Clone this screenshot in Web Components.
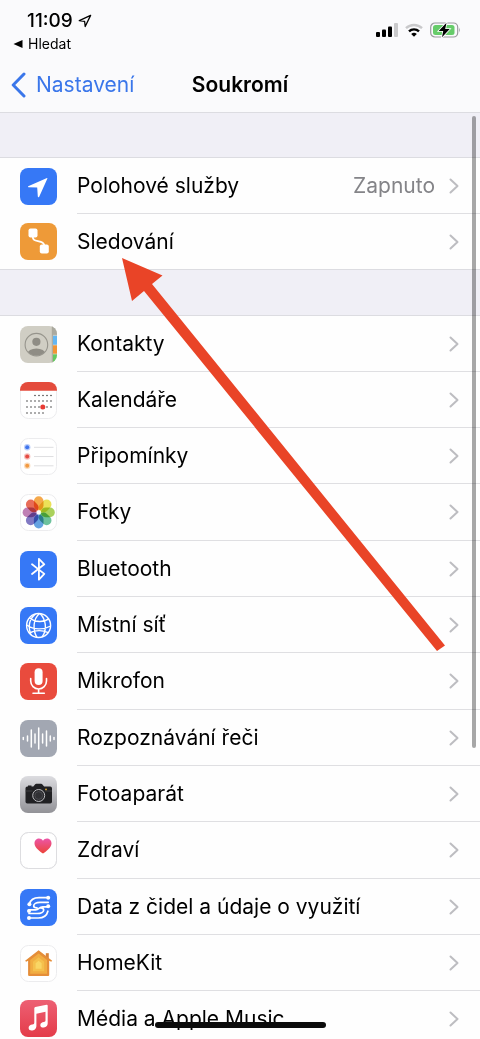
<!DOCTYPE html>
<html lang="cs">
<head>
<meta charset="utf-8">
<meta name="viewport" content="width=device-width, initial-scale=1">
<title>Soukromí</title>
<style>
html, body { margin: 0; }
body { font-family: Inter, "Noto Sans", sans-serif; color: #000; background: #f0eff6; }
</style>
</head>
<body>
<privacy-screen>
  <status-bar slot="top" time="11:09" back="Hledat"></status-bar>
  <nav-bar slot="top" back="Nastavení">Soukromí</nav-bar>
  <settings-group>
    <settings-row icon="location" value="Zapnuto">Polohové služby</settings-row>
    <settings-row icon="tracking">Sledování</settings-row>
  </settings-group>
  <settings-group>
    <settings-row icon="contacts">Kontakty</settings-row>
    <settings-row icon="calendar">Kalendáře</settings-row>
    <settings-row icon="reminders">Připomínky</settings-row>
    <settings-row icon="photos">Fotky</settings-row>
    <settings-row icon="bluetooth">Bluetooth</settings-row>
    <settings-row icon="network">Místní síť</settings-row>
    <settings-row icon="microphone">Mikrofon</settings-row>
    <settings-row icon="speech">Rozpoznávání řeči</settings-row>
    <settings-row icon="camera">Fotoaparát</settings-row>
    <settings-row icon="health">Zdraví</settings-row>
    <settings-row icon="sensors">Data z čidel a údaje o využití</settings-row>
    <settings-row icon="home">HomeKit</settings-row>
    <settings-row icon="music">Média a Apple Music</settings-row>
  </settings-group>
</privacy-screen>

<script>
const tile = (fill, body) => `<rect width="37" height="37" rx="8" fill="${fill}"/>${body}`;
const whiteTile = body => `<rect x=".5" y=".5" width="36" height="36" rx="8" fill="#fff" stroke="#ececee"/>${body}`;

const calendarDots = [[13.5, 15, 31], [19, 7, 31], [25, 7, 31], [31, 7, 23]].map(([y, from, to]) => {
  let dots = '';
  for (let x = from; x <= to; x += 4) dots += `<circle cx="${x}" cy="${y}" r=".8"/>`;
  return dots;
}).join('');

const petals = ['#f39a2d', '#e9dc3b', '#9bc93f', '#54b78c', '#4a93dc', '#6b62b8', '#b56aa8', '#e4523b'].map((c, i) =>
  `<rect x="13.9" y="2.3" width="9.6" height="14" rx="4.8" fill="${c}" fill-opacity=".85" transform="rotate(${i * 45} 18.7 18.4)" style="mix-blend-mode:multiply"/>`).join('');

const soundBars = [[3.3, 2], [7.5, 5], [11.3, 17], [15, 9], [18.7, 21], [22.6, 9], [26.5, 15], [30.3, 5], [34, 2]].map(([x, h]) =>
  `<path d="M${x} ${18.6 - h / 2}v${h}"/>`).join('');

const ICONS = {
  location: tile('#3678f6', '<path d="M27 9.9 8.2 18.2q-.6.8.4 1l8.6.3.6 9q.6 1.3 1.4.2L27.4 10.4q.1-.6-.4-.5z" fill="#fff"/>'),
  tracking: tile('#ee9a38', '<rect x="8.5" y="5.500" width="9" height="9" rx="2" fill="#fff"/><rect x="19.800" y="21.600" width="9" height="9" rx="2" fill="#fff"/><path d="M12.700 13c0 4 2 4.600 5.200 5.200 4.300.8 6.300 1.600 6.500 4.800" fill="none" stroke="#fff" stroke-width="1.800"/>'),
  contacts: `<defs><clipPath id="c"><rect width="37" height="37" rx="8"/></clipPath><clipPath id="p"><circle cx="16.400" cy="18.700" r="11"/></clipPath></defs>
    <g clip-path="url(#c)"><path fill="#d0cec4" d="M0 0h37v37H0z"/><path fill="#aaa99f" d="M32 0h5v9.500h-5z"/><path fill="#63b6f2" d="M32.800 9.500H37V19h-4.200z"/><path fill="#f29434" d="M32.800 19H37v9h-4.200z"/><path fill="#63cb60" d="M32.800 28H37v9h-4.200z"/><path stroke="#aaa89d" d="M32.300 0v37"/><path stroke="#d9d7ce" stroke-width=".7" d="M33 9.300h4M33 19h4M33 28h4"/></g>
    <g clip-path="url(#p)" fill="#8f8d85"><circle cx="16.400" cy="15.800" r="4.100"/><ellipse cx="16.400" cy="28" rx="9" ry="5.500"/></g><circle cx="16.400" cy="18.700" r="11.300" fill="none" stroke="#96948c" stroke-width="1.100"/>`,
  calendar: whiteTile(`<path d="M0 8.700V8a8 8 0 0 1 8-8h21a8 8 0 0 1 8 8v.7z" fill="#e44b3c"/><g fill="#444">${calendarDots}</g><circle cx="22.800" cy="25" r="2.500" fill="#e83b34"/>`),
  reminders: whiteTile(['#3e74ed', '#e54a41', '#f29a42'].map((c, i) => {
    const y = 9.3 + i * 9.25;
    return `<circle cx="7.200" cy="${y}" r="3.200" fill="${c}" opacity=".35"/><circle cx="7.200" cy="${y}" r="2" fill="${c}"/><path d="M14 ${y}h19.500" stroke="#dedee0" stroke-width="1"/>`;
  }).join('')),
  photos: whiteTile(`<g style="isolation:isolate">${petals}</g><circle cx="18.700" cy="18.400" r="1.500" fill="#fff"/>`),
  bluetooth: tile('#3678f6', '<path d="m12 13.200 12.300 9.700-5.400 5.800V7.800l5.400 5.500L12 23" fill="none" stroke="#fff" stroke-width="1.800" stroke-linejoin="round" stroke-linecap="round"/>'),
  network: tile('#3678f6', '<g fill="none" stroke="#fff" stroke-width="1.400"><circle cx="18.600" cy="18.500" r="12"/><path d="M19.500 6.500C13 12 12.500 23 17 30.500M20 6.500c6 6 7.500 16.500 2 23.500M9.500 11c6 4.500 14 4.800 19.500.5M6.700 18c7 5 17 5 24 1M9.300 26c6-3 13-3 19-.4M15.500 7C8 13 8 20 11 28"/></g>'),
  microphone: tile('#e94b3d', '<rect x="14.600" y="5.300" width="8" height="16.800" rx="4" fill="#fff"/><path d="M10.700 15.500v2.600a7.900 7.900 0 0 0 15.800 0v-2.600M18.600 26v4M13 30.300h11.300" fill="none" stroke="#fff" stroke-width="1.600" stroke-linecap="round"/>'),
  speech: tile('#a2a7b2', `<g stroke="#fff" stroke-width="1.500" stroke-linecap="round">${soundBars}</g>`),
  camera: `<defs><linearGradient id="g" x2="0" y2="1"><stop stop-color="#dcdce0"/><stop offset="1" stop-color="#929297"/></linearGradient></defs>${tile('url(#g)', '<path d="M7.300 10.500h.7v-1h3.500v1h1.800l1.900-2.300q.4-.5 1-.5h5q.6 0 1 .5l1.900 2.300h6.100q1.800 0 1.800 1.800v13.400q0 1.800-1.800 1.800H7.300q-1.800 0-1.800-1.800V12.300q0-1.800 1.800-1.800z" fill="#202023"/><path d="M5.500 15h7M25 15h7" stroke="#4a4a4d" stroke-width=".7"/><circle cx="18.700" cy="19.500" r="6" fill="#29292c" stroke="#bcbcc0" stroke-width="1"/><circle cx="18.700" cy="19.500" r="3.900" fill="#303034" stroke="#55555a" stroke-width=".7"/><circle cx="26" cy="13.400" r=".9" fill="#e3ae37"/>')}`,
  health: `<defs><linearGradient id="g" x2="0" y2="1"><stop stop-color="#ec55a7"/><stop offset="1" stop-color="#ec4438"/></linearGradient></defs>${whiteTile('<rect x=".5" y=".5" width="36" height="36" rx="8" fill="none" stroke="#dddde0"/><path d="M23 21.500c-3-2.200-8.500-5.800-8.500-10.100 0-5.200 6.200-6.500 8.500-2.600 2.300-3.900 8.500-2.600 8.500 2.600 0 4.300-5.500 7.900-8.500 10.100z" fill="url(#g)"/>')}`,
  sensors: tile('#3678f6', '<g fill="none" stroke="#fff" stroke-width="1.700" stroke-linecap="round"><path d="M28.200 8.700H19c-5 0-8.500 2-9.500 6.300M9 29h9.200c5 0 8.500-2 9.700-6.800M28.200 13.300H20c-4 0-6.300 1.700-6.300 3.600s1.300 1.900 3.300 1.900M9 24.500h8.200c4 0 6.500-1.700 6.500-3.600s-1.400-2.100-3.200-2.100M28.200 17.800h-5.400c-4 0-3.600 3-7.200 3H9"/></g><g fill="#fff"><circle cx="28.200" cy="8.700" r="2"/><circle cx="28.200" cy="17.200" r="2"/><circle cx="9.400" cy="15.200" r="2"/><circle cx="9" cy="22" r="2"/><circle cx="9" cy="29" r="2"/></g>'),
  home: whiteTile('<path d="M25.800 8.200h3v6h-3z" fill="#d8843a"/><path d="m18.600 5.300 13.600 10.500-1 1-2-1V30q0 1-1 1H9.100q-1 0-1-1V15.800l-2 1-1-1z" fill="#e58e39"/><path d="m18.600 8.500 8.400 6.600v13.700H10.200V15.100z" fill="#f1ad42"/><path d="m18.600 12.300 5.600 4.400v9.600H13v-9.600z" fill="#f5c04d"/><path d="m18.600 15.800 3 2.400v5.500h-6v-5.500z" fill="#f9d665"/>'),
  music: `<defs><linearGradient id="g" x2="0" y2="1"><stop stop-color="#ed6074"/><stop offset="1" stop-color="#e43b49"/></linearGradient></defs>${tile('url(#g)', '<path d="M14.300 8.300q0-1 1-1.200l11.200-2.300q1.200-.2 1.200 1v17.400c0 5-7.400 5.800-7.400 2 0-2.200 1.700-2.900 3.500-3.200 1.200-.2 1.700-.6 1.700-1.800v-8.400l-9.100 1.900v12.200c0 5.200-7.800 6-7.800 2 0-2.200 1.800-3 3.800-3.300 1.400-.3 1.900-.7 1.900-2z" fill="#fff"/>')}`
};

class BaseElement extends HTMLElement {
  connectedCallback() {
    if (this.shadowRoot) return;
    this.attachShadow({ mode: 'open' }).innerHTML = this.render();
  }
}

customElements.define('app-icon', class extends BaseElement {
  render() {
    return `<style>:host { display: block; flex: none; width: 37px; height: 37px; } svg { display: block; width: 100%; height: 100%; }</style>
      <svg viewBox="0 0 37 37" aria-hidden="true">${ICONS[this.getAttribute('name')]}</svg>`;
  }
});

customElements.define('status-bar', class extends BaseElement {
  render() {
    return `<style>
        :host { display: flex; justify-content: space-between; align-items: flex-start; padding: 9px 19px 0 12px; }
        .time { display: flex; align-items: center; gap: 5px; margin-left: 15px; font-size: 19px; line-height: 24px; font-weight: 500; }
        a { display: flex; align-items: center; gap: 5px; margin-top: 3px; font-size: 14px; line-height: 16px; color: #000; text-decoration: none; }
        .signals { display: flex; align-items: center; gap: 7px; margin-top: 13px; }
        svg { display: block; flex: none; }
      </style>
      <div>
        <div class="time"><span>${this.getAttribute('time')}</span>
          <svg width="14" height="14" viewBox="0 0 14 14" aria-hidden="true"><path d="M12.600 1.400 1.300 6.700l5.300.6.6 5.200z" fill="none" stroke="#000" stroke-width="1.300" stroke-linejoin="round"/></svg></div>
        <a href="#"><svg width="11" height="10" viewBox="0 0 11 10" aria-hidden="true"><path d="M1.500 5 10.500 1v8z"/></svg><span>${this.getAttribute('back')}</span></a>
      </div>
      <div class="signals" aria-hidden="true">
        <svg width="22" height="14" viewBox="0 0 22 14"><rect y="9" width="4" height="5" rx="1"/><rect x="6" y="6.500" width="4" height="7.500" rx="1"/><rect x="12" y="3.500" width="4" height="10.500" rx="1"/><rect x="18" width="4" height="14" rx="1" fill="#c9c9cb"/></svg>
        <svg width="18" height="14" viewBox="0 0 18 14"><g fill="none" stroke-width="2.400"><path d="M1 5.200a11.500 11.500 0 0 1 16 0" stroke="#c9c9cb"/><path d="M4 8.400a7.200 7.200 0 0 1 10 0" stroke="#000"/></g><path d="M9 13.700 6.200 11a4 4 0 0 1 5.600 0z"/></svg>
        <svg width="31" height="16" viewBox="0 0 31 16"><rect x=".7" y="1" width="27" height="14" rx="4.300" fill="none" stroke="#9a9a9d" stroke-width="1.200"/><rect x="3" y="3" width="21.500" height="10" rx="2.500" fill="#66cc6a"/><path d="M29.200 5.500q1.500 2.500 0 5z" fill="#8d8d90"/><path d="M16.500.8 8.700 9h4.500L12 15.300 19.700 7h-4.500z" stroke="#fff" stroke-width="1.600" paint-order="stroke"/></svg>
      </div>`;
  }
});

customElements.define('nav-bar', class extends BaseElement {
  render() {
    return `<style>
        :host { display: grid; grid-template-columns: 1fr auto 1fr; align-items: center; padding: 17px 11px 11px; line-height: 32px; }
        a { display: flex; align-items: center; gap: 10px; color: #3a76ea; text-decoration: none; font-size: 21px; }
        svg { display: block; flex: none; }
        h1 { margin: 0; font-size: 21px; font-weight: 600; }
      </style>
      <a href="#"><svg width="15" height="26" viewBox="0 0 15 26" aria-hidden="true"><path d="M13 2 2.200 13 13 24" fill="none" stroke="#3a76ea" stroke-width="3" stroke-linecap="round" stroke-linejoin="round"/></svg><span>${this.getAttribute('back')}</span></a>
      <h1><slot></slot></h1>`;
  }
});

customElements.define('settings-group', class extends BaseElement {
  render() {
    return `<style>
        :host { display: block; margin-top: 45px; border-top: 1px solid #dcdce1; background: #fefefe; }
        :host(:first-of-type) { margin-top: 44px; }
        :host(:not(:last-child)) { border-bottom: 1px solid #dcdce1; }
        ::slotted(:nth-child(3n + 4)) { --row-height: 57px; }
        ::slotted(:last-child) { --divider: 0; --row-height: 55px; }
      </style><slot></slot>`;
  }
});

customElements.define('settings-row', class extends BaseElement {
  render() {
    const value = this.getAttribute('value');
    return `<style>
        :host { display: block; }
        a { display: flex; align-items: center; gap: 20px; padding-left: 20px; color: inherit; text-decoration: none; font-size: 21px; line-height: 28px; }
        .body { flex: 1; display: flex; align-items: center; gap: 14px; box-sizing: border-box; min-height: var(--row-height, 56px); padding-right: 21px; border-bottom: var(--divider, 1px) solid #dfdfe2; }
        .label { flex: 1; }
        .value { color: #848488; }
        svg { display: block; flex: none; }
      </style>
      <a href="#"><app-icon name="${this.getAttribute('icon')}"></app-icon>
        <span class="body"><span class="label"><slot></slot></span>${value ? `<span class="value">${value}</span>` : ''}
        <svg width="10" height="16" viewBox="0 0 10 16" aria-hidden="true"><path d="m1.500 1.500 7 6.500-7 6.500" fill="none" stroke="#bdbdc1" stroke-width="2" stroke-linecap="round" stroke-linejoin="round"/></svg></span></a>`;
  }
});

customElements.define('pointer-arrow', class extends BaseElement {
  render() {
    return `<style>:host { display: block; pointer-events: none; } svg { display: block; }</style>
      <svg width="324" height="394" viewBox="0 0 324 394" aria-hidden="true"><path d="M0 0 40.500 17.500 30 26 323 387.500 315 393 22 33 10 43z" fill="#e94427"/></svg>`;
  }
});

customElements.define('privacy-screen', class extends BaseElement {
  render() {
    return `<style>
        :host { display: flex; flex-direction: column; position: relative; height: 100vh; overflow: hidden; }
        header { flex: none; background: #fafafc; border-bottom: 1px solid #dcdce1; }
        main { flex: 1; min-height: 0; overflow: hidden; }
        .thumb { position: absolute; top: 116px; right: 4px; width: 4px; height: 632px; border-radius: 2px; background: rgba(0, 0, 0, .34); }
        pointer-arrow { position: absolute; top: 258px; left: 122px; }
        .home { position: absolute; bottom: 11px; left: 50%; width: 171px; height: 6px; margin-left: -85px; border-radius: 3px; background: #0b0b0b; }
      </style>
      <header><slot name="top"></slot></header>
      <main><slot></slot></main>
      <div class="thumb"></div>
      <pointer-arrow></pointer-arrow>
      <div class="home"></div>`;
  }
});
</script>
</body>
</html>
